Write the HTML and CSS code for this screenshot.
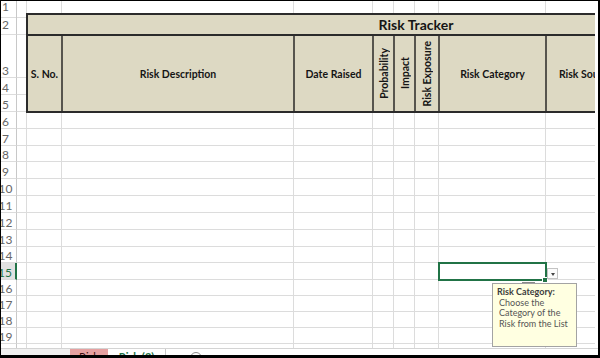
FILE: index.html
```html
<!DOCTYPE html>
<html lang="en">
<head>
<meta charset="UTF-8">
<title>Risk Tracker</title>
<link rel="stylesheet" href="styles.css">
</head>
<body>

<div class="frame">
  <div class="view">
    <div class="sheet">

      <!-- row 1 -->
      <div class="row r1"><div class="rh">1</div><span></span><span></span><span></span><span></span><span></span><span></span><span></span><span></span><span></span><span></span><span></span></div>

      <!-- rows 2-5: header block -->
      <div class="band">
        <div class="rh r2">2</div><span class="a"></span>
        <div class="block">
          <div class="title">Risk Tracker</div>
          <div class="hd">S. No.</div>
          <div class="hd">Risk Description</div>
          <div class="hd">Date Raised</div>
          <div class="hd"><span class="vt">Probability</span></div>
          <div class="hd"><span class="vt">Impact</span></div>
          <div class="hd"><span class="vt">Risk Exposure</span></div>
          <div class="hd">Risk Category</div>
          <div class="hd">Risk Source</div>
          <div class="hd"></div>
        </div>
        <div class="rh">3</div><span class="a"></span>
        <div class="rh">4</div><span class="a"></span>
        <div class="rh">5</div><span class="a"></span>
      </div>

      <div class="row"><div class="rh">6</div><span></span><span></span><span></span><span></span><span></span><span></span><span></span><span></span><span></span><span></span><span></span></div>
      <div class="row"><div class="rh">7</div><span></span><span></span><span></span><span></span><span></span><span></span><span></span><span></span><span></span><span></span><span></span></div>
      <div class="row s"><div class="rh">8</div><span></span><span></span><span></span><span></span><span></span><span></span><span></span><span></span><span></span><span></span><span></span></div>
      <div class="row"><div class="rh">9</div><span></span><span></span><span></span><span></span><span></span><span></span><span></span><span></span><span></span><span></span><span></span></div>
      <div class="row"><div class="rh">10</div><span></span><span></span><span></span><span></span><span></span><span></span><span></span><span></span><span></span><span></span><span></span></div>
      <div class="row"><div class="rh">11</div><span></span><span></span><span></span><span></span><span></span><span></span><span></span><span></span><span></span><span></span><span></span></div>
      <div class="row"><div class="rh">12</div><span></span><span></span><span></span><span></span><span></span><span></span><span></span><span></span><span></span><span></span><span></span></div>
      <div class="row"><div class="rh">13</div><span></span><span></span><span></span><span></span><span></span><span></span><span></span><span></span><span></span><span></span><span></span></div>
      <div class="row s"><div class="rh">14</div><span></span><span></span><span></span><span></span><span></span><span></span><span></span><span></span><span></span><span></span><span></span></div>

      <!-- row 15: selected cell with validation message -->
      <div class="row">
        <div class="rh on">15</div><span></span><span></span><span></span><span></span><span></span><span></span><span></span>
        <span class="cur">
          <i class="pick"></i>
          <i class="handle"></i>
          <i class="dd"><b></b></i>
          <i class="ghost"></i>
          <div class="tip">
            <strong>Risk Category:</strong>
            <p>Choose the</p>
            <p>Category of the</p>
            <p>Risk from the List</p>
          </div>
        </span>
        <span></span><span></span><span></span>
      </div>

      <div class="row s"><div class="rh">16</div><span></span><span></span><span></span><span></span><span></span><span></span><span></span><span></span><span></span><span></span><span></span></div>
      <div class="row s"><div class="rh">17</div><span></span><span></span><span></span><span></span><span></span><span></span><span></span><span></span><span></span><span></span><span></span></div>
      <div class="row s"><div class="rh">18</div><span></span><span></span><span></span><span></span><span></span><span></span><span></span><span></span><span></span><span></span><span></span></div>
      <div class="row s"><div class="rh">19</div><span></span><span></span><span></span><span></span><span></span><span></span><span></span><span></span><span></span><span></span><span></span></div>
      <div class="row r20"><div class="rh">20</div><span></span><span></span><span></span><span></span><span></span><span></span><span></span><span></span><span></span><span></span><span></span></div>

    </div>
  </div>

  <!-- sheet tabs -->
  <div class="tabs">
    <div class="nav"></div>
    <div class="tab red">Risk</div>
    <div class="tab on">Risk (2)</div>
    <div class="add"><span class="plus"></span></div>
  </div>
</div>

</body>
</html>
```

FILE: styles.css
```css
body { margin: 0; font-family: Lato, "Liberation Sans", sans-serif; }

.frame { width: 600px; height: 358px; box-sizing: border-box; border: solid #000; border-width: 1px 2px 3px 1px;
         background: #fff; overflow: hidden; display: flex; flex-direction: column; }
.view { width: 594px; height: 347px; flex: none; overflow: hidden; }
.sheet { width: 816px; margin-left: -11px; }

/* grid rows */
.row { display: grid; height: 17px;
       grid-template-columns: 27px 10px 35px 232px 79px 21px 21px 24px 107px 80px 80px 100px; }
.row.s { height: 16px; }
.row.r1 { height: 12px; }
.row.r20 { height: 20px; }
.band { display: grid; grid-template-columns: 27px 10px 1fr; grid-template-rows: 22px 43px 17px 17px; }
.row > *, .band > * { box-sizing: border-box; border-right: 1px solid #dcdcdc; border-bottom: 1px solid #dcdcdc; }

/* row numbers */
.rh { display: flex; align-items: flex-end; justify-content: center; padding-left: 5px;
      font-size: 12px; line-height: 12px; color: #666; border-right-color: #c8c8c8 !important; }
.r1 .rh { padding-bottom: 4px; }
.rh.r2 { padding-bottom: 3px; }
.rh.on { background: #e1e1e1; color: #217346; border-right: 2px solid #217346 !important; }

/* header block */
.band .block { grid-column: 3; grid-row: 1 / 5; margin: 0 0 -1px -1px; position: relative; z-index: 1;
               border: 2px solid #2b2b2b; background: #ddd9c3; color: #151515; font-weight: bold;
               display: grid; grid-template-columns: 35px 232px 79px 21px 21px 24px 107px 80px 1fr;
               grid-template-rows: 21px 1fr; }
.title { grid-column: 1 / -1; border-bottom: 2px solid #2b2b2b; text-align: center; font-size: 14px; line-height: 19px; }
.hd { display: flex; align-items: center; justify-content: center; text-align: center;
      border-right: 2px solid #57554e; font-size: 10.5px; }
.hd:last-child { border-right: none; }
.vt { writing-mode: vertical-rl; transform: rotate(180deg); white-space: nowrap; }

/* selected cell */
.cur { position: relative; z-index: 2; }
.cur i { position: absolute; display: block; box-sizing: border-box; }
.pick { top: -1px; left: -1px; right: -2px; bottom: -2px; border: 2px solid #217346; }
.handle { right: -3px; bottom: -4px; width: 6px; height: 6px; background: #217346; border: 1px solid #fff; }
.dd { left: 108px; top: 5px; width: 11px; height: 11px; border: 1px solid #c3c3c3; background: #fbfbfb;
      display: flex !important; align-items: center; justify-content: center; }
.dd b { border-left: 2.5px solid transparent; border-right: 2.5px solid transparent; border-top: 3px solid #444; margin-top: 1px; }
.ghost { left: 83px; top: 19px; width: 13px; height: 6px; background: #dedede; border-top: 1px solid #8a8a8a; }
.tip { position: absolute; left: 53px; top: 20px; width: 85px; height: 64px; box-sizing: border-box;
       border: 1px solid #a3a3a3; background: #ffffe1; padding: 3px 4px; font-size: 9px; line-height: 10.7px; color: #555; }
.tip strong { display: block; color: #3c3c3c; }
.tip p { margin: 0; padding-left: 2px; white-space: nowrap; }

/* sheet tabs */
.tabs { flex: none; height: 7px; display: flex; background: #f0f0f0; border-top: 1px solid #d4d4d4; box-sizing: border-box; }
.nav { width: 69px; }
.tab { text-align: center; font-size: 11px; line-height: 11px; padding-top: 2px; overflow: hidden; }
.tab.red { width: 38px; background: #e6a1a1; color: #3d1010; }
.tab.on { width: 57px; background: #fff; color: #217346; font-weight: bold; }
.add { flex: 1; background: #fff; border-left: 1px solid #c8c8c8; padding-left: 24px; }
.plus { display: block; width: 12px; height: 12px; margin-top: 3px; box-sizing: border-box;
        border: 1px solid #8a8a8a; border-radius: 50%; }
```
